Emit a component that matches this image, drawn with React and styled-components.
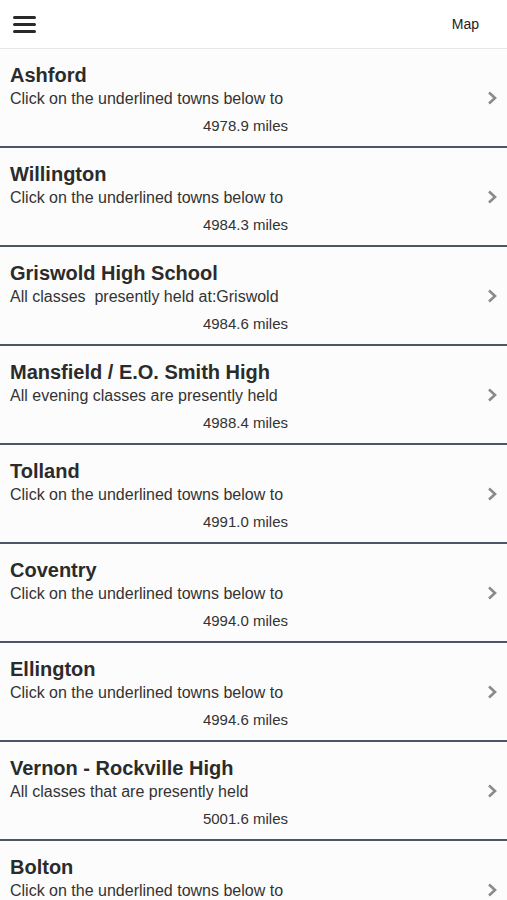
import React from "react";
import styled, { createGlobalStyle } from "styled-components";

const GlobalStyle = createGlobalStyle`
  body {
    margin: 0;
    background: #fcfcfc;
    font-family: "Liberation Sans", Arial, sans-serif;
    color: #222;
  }
`;

const Header = styled.header`
  height: 48px;
  background: #fff;
  border-bottom: 1px solid #e6e6e6;
  display: flex;
  align-items: center;
  justify-content: space-between;
  padding: 0 28px 0 13px;
`;

const MenuButton = styled.div`
  width: 23px;
  display: flex;
  flex-direction: column;
  gap: 4px;
  span {
    display: block;
    height: 3px;
    border-radius: 2px;
    background: #2a2a2a;
  }
`;

const MapLink = styled.span`
  font-size: 14px;
  color: #222;
`;

const List = styled.div`
  display: flex;
  flex-direction: column;
`;

const Row = styled.div`
  height: 97px;
  display: flex;
  align-items: center;
  background: #fcfcfc;
  border-bottom: 2px solid #4d5668;
  box-shadow: 0 1px 0 #d8dbe0;
`;

const Body = styled.div`
  flex: 1;
  padding: 4px 0 0 10px;
`;

const Title = styled.div`
  font-size: 20px;
  font-weight: bold;
  color: #2b2b2b;
  line-height: 24px;
`;

const Subtitle = styled.div`
  font-size: 16px;
  color: #333;
  line-height: 21px;
  margin-top: 1px;
`;

const Miles = styled.div`
  width: 278px;
  text-align: right;
  font-size: 15px;
  color: #333;
  line-height: 20px;
  margin-top: 7px;
`;

const Chevron = styled.svg`
  width: 14px;
  height: 16px;
  margin-right: 8px;
  margin-top: 0;
`;

const places = [
  ["Ashford", "Click on the underlined towns below to", "4978.9"],
  ["Willington", "Click on the underlined towns below to", "4984.3"],
  ["Griswold High School", "All classes  presently held at:Griswold", "4984.6"],
  ["Mansfield / E.O. Smith High", "All evening classes are presently held", "4988.4"],
  ["Tolland", "Click on the underlined towns below to", "4991.0"],
  ["Coventry", "Click on the underlined towns below to", "4994.0"],
  ["Ellington", "Click on the underlined towns below to", "4994.6"],
  ["Vernon - Rockville High", "All classes that are presently held", "5001.6"],
  ["Bolton", "Click on the underlined towns below to", "5005.2"],
];

export default function App() {
  return (
    <>
      <GlobalStyle />
      <Header>
        <MenuButton>
          <span />
          <span />
          <span />
        </MenuButton>
        <MapLink>Map</MapLink>
      </Header>
      <List>
        {places.map(([name, text, miles]) => (
          <Row key={name}>
            <Body>
              <Title>{name}</Title>
              <Subtitle>{text.replace(/ {2}/g, "\u00a0 ")}</Subtitle>
              <Miles>{miles} miles</Miles>
            </Body>
            <Chevron viewBox="0 0 14 16">
              <path d="M4 2.5 L10 8 L4 13.5" fill="none" stroke="#8a8a8a" strokeWidth="2.6" />
            </Chevron>
          </Row>
        ))}
      </List>
    </>
  );
}
